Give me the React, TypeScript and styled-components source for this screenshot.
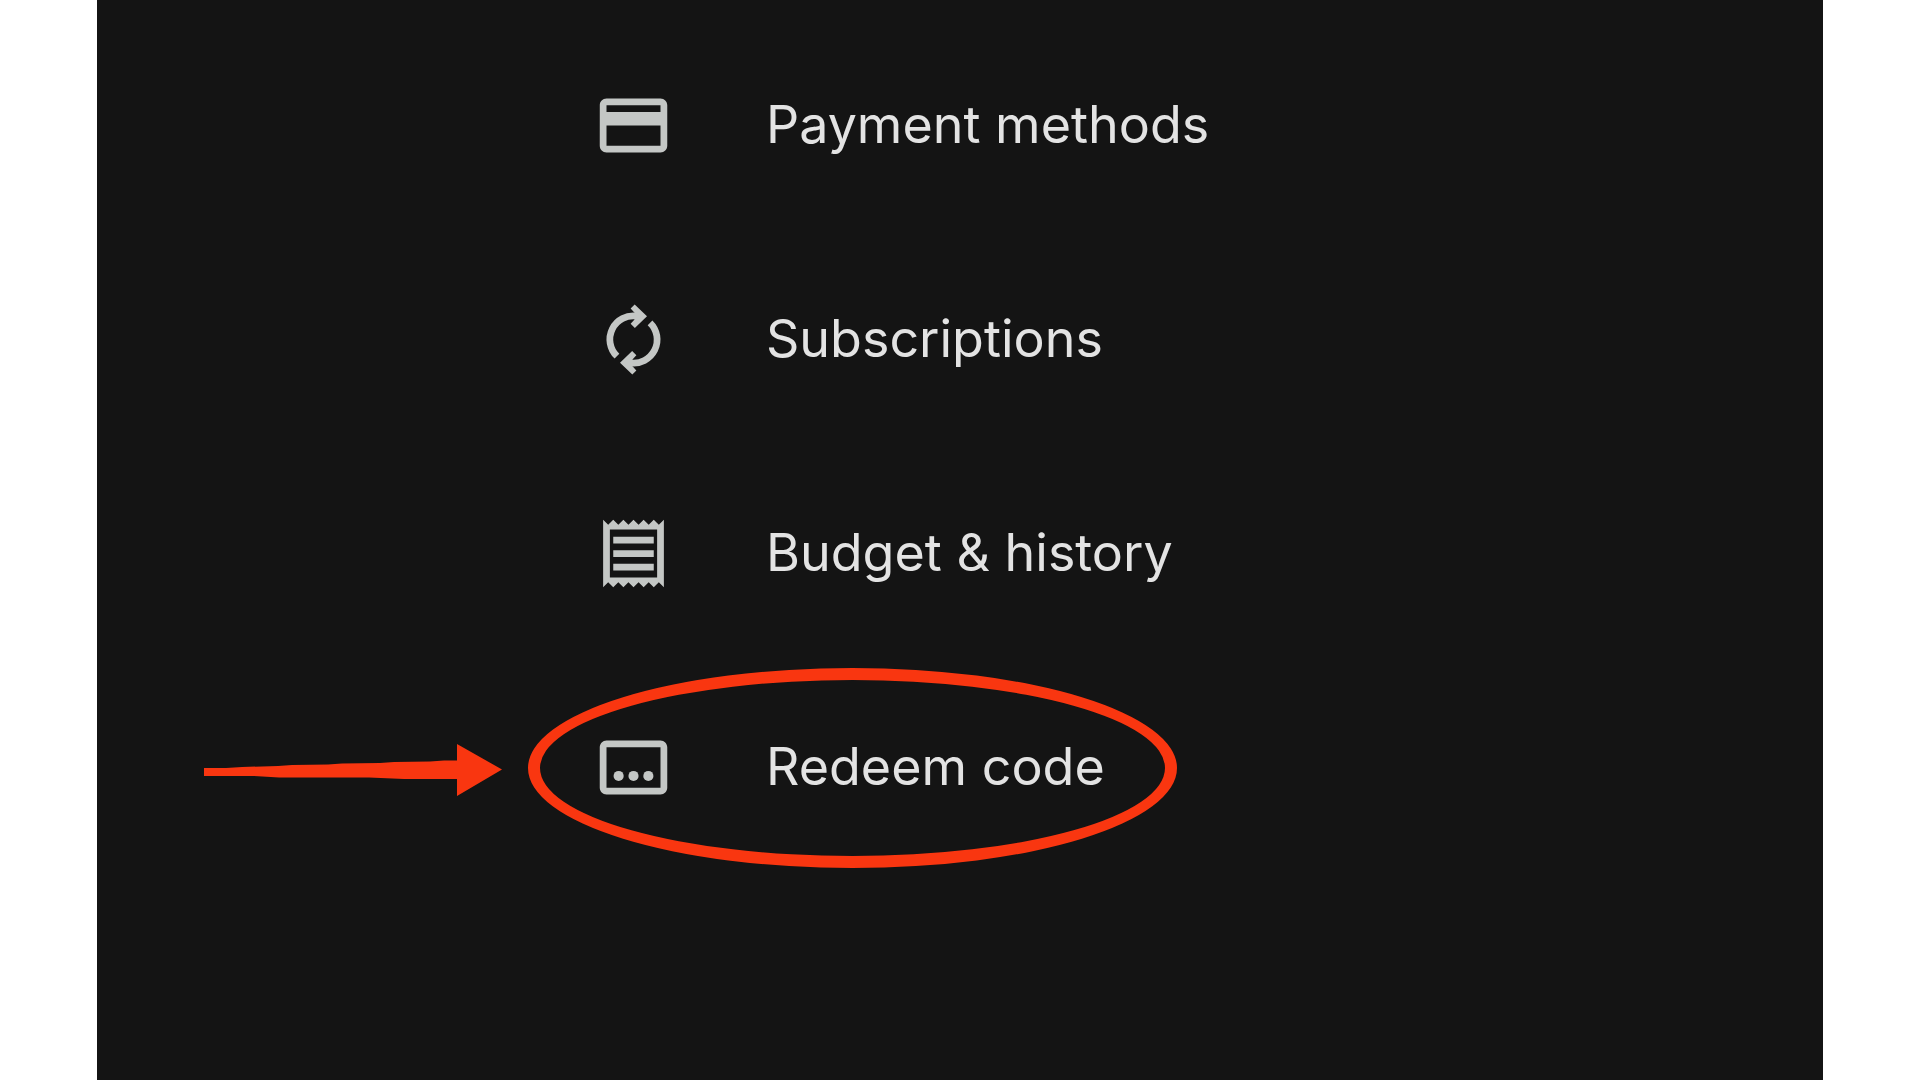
import React from "react";
import styled, { createGlobalStyle } from "styled-components";

const GlobalStyle = createGlobalStyle`
  body {
    margin: 0;
    background: #ffffff;
  }
`;

const Page = styled.main`
  box-sizing: border-box;
  min-height: 100vh;
  padding: 0 97px;
  display: flex;
`;

const Panel = styled.nav`
  flex: 1;
  padding: 18px 0 0 496px;
  background: #141414;
`;

const Menu = styled.ul`
  list-style: none;
  margin: 0;
  padding: 0;
`;

const Item = styled.li`
  position: relative;
`;

const ItemLink = styled.a`
  display: flex;
  align-items: center;
  gap: 92px;
  height: 214px;
  color: #e3e3e3;
  font-family: Inter, Roboto, sans-serif;
  font-size: 52px;
  line-height: 64px;
  text-decoration: none;
  white-space: nowrap;
`;

const Icon = styled.svg`
  flex: none;
  width: 81px;
  height: 81px;
  fill: #c4c7c5;
`;

const Ring = styled.span`
  position: absolute;
  left: -65px;
  top: 8px;
  box-sizing: border-box;
  width: 649px;
  height: 200px;
  border: 12px solid #f93610;
  border-radius: 50%;
  pointer-events: none;
`;

const Arrow = styled.svg`
  position: absolute;
  left: -389px;
  top: 84px;
  width: 298px;
  height: 52px;
  fill: #f93610;
`;

const CardIcon = () => (
  <Icon viewBox="0 0 24 24" aria-hidden="true">
    <path d="M20 4H4c-1.11 0-1.99.89-1.99 2L2 18c0 1.11.89 2 2 2h16c1.11 0 2-.89 2-2V6c0-1.11-.89-2-2-2zm0 14H4v-6h16v6zm0-10H4V6h16v2z" />
  </Icon>
);

const RenewIcon = () => (
  <Icon viewBox="0 0 24 24" aria-hidden="true">
    {[0, 180].map((angle) => (
      <g key={angle} transform={`rotate(${angle} 12 12)`}>
        <path
          d="M7.1 16.95A6.95 6.95 0 0 1 13 5.1"
          fill="none"
          stroke="#c4c7c5"
          strokeWidth="2"
        />
        <path d="M12.35 1.6 16 5.1 12.4 8.6 11.15 7.35 12.3 6.1V4.1L11.15 2.85z" />
      </g>
    ))}
  </Icon>
);

const ReceiptIcon = () => (
  <Icon viewBox="0 0 24 24" aria-hidden="true">
    <path d="M19.5 3.5L18 2l-1.5 1.5L15 2l-1.5 1.5L12 2l-1.5 1.5L9 2 7.5 3.5 6 2 4.5 3.5 3 2v20l1.5-1.5L6 22l1.5-1.5L9 22l1.5-1.5L12 22l1.5-1.5L15 22l1.5-1.5L18 22l1.5-1.5L21 22V2l-1.5 1.5zM19 19.09H5V4.91h14v14.18zM6 15h12v2H6zm0-4h12v2H6zm0-4h12v2H6z" />
  </Icon>
);

const CodeIcon = () => (
  <Icon viewBox="0 0 24 24" aria-hidden="true">
    <path d="M20 4H4c-1.1 0-2 .9-2 2v12c0 1.1.9 2 2 2h16c1.1 0 2-.9 2-2V6c0-1.1-.9-2-2-2zm0 14H4V6h16v12z" />
    <circle cx="7.6" cy="14.5" r="1.5" />
    <circle cx="12" cy="14.5" r="1.5" />
    <circle cx="16.4" cy="14.5" r="1.5" />
  </Icon>
);

const items = [
  { label: "Payment methods", Glyph: CardIcon },
  { label: "Subscriptions", Glyph: RenewIcon },
  { label: "Budget & history", Glyph: ReceiptIcon },
  { label: "Redeem code", Glyph: CodeIcon, marked: true },
];

export default function App() {
  return (
    <>
      <GlobalStyle />
      <Page>
        <Panel>
          <Menu>
            {items.map(({ label, Glyph, marked }) => (
              <Item key={label}>
                <ItemLink href="#">
                  <Glyph />
                  <span>{label}</span>
                </ItemLink>
                {marked && (
                  <>
                    <Arrow viewBox="0 0 298 52" aria-hidden="true">
                      <path d="M0 24H22L38 23 74 22 88 21 124 20.500 138 19.500 176 19 190 18 226 17.500 240 16.500H253V0L298 25.500 253 52V35H200L165 33.500H75L50 32H0z" />
                    </Arrow>
                    <Ring />
                  </>
                )}
              </Item>
            ))}
          </Menu>
        </Panel>
      </Page>
    </>
  );
}
